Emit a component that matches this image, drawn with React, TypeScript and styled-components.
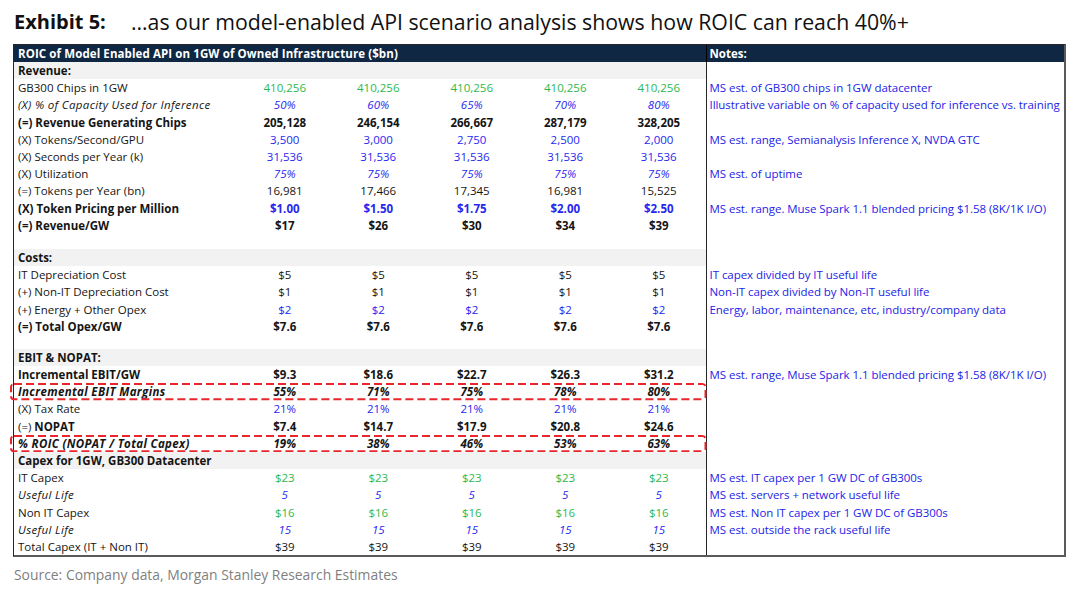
import React from 'react';
import styled, { createGlobalStyle } from 'styled-components';

type Tone = 'black' | 'green' | 'blue';

interface RowData {
  label?: React.ReactNode;
  values?: string[];
  tone?: Tone;
  labelBold?: boolean;
  labelItalic?: boolean;
  valueBold?: boolean;
  valueItalic?: boolean;
  note?: string;
  band?: boolean;
  highlight?: boolean;
  spacer?: number;
}

const ROW_H = 17.2;

const toneColor: Record<Tone, string> = {
  black: '#151515',
  green: '#2db84d',
  blue: '#2727f0',
};

const GlobalStyle = createGlobalStyle`
  html, body {
    margin: 0;
    padding: 0;
    background: #ffffff;
  }
  body {
    font-family: "Open Sans", "Noto Sans", sans-serif;
    color: #151515;
  }
`;

const Page = styled.div`
  width: 1080px;
  height: 593px;
  padding-left: 13px;
  box-sizing: border-box;
  overflow: hidden;
`;

const Title = styled.h1`
  margin: 0;
  height: 44px;
  display: flex;
  align-items: center;
  padding: 0 0 2px 1px;
  box-sizing: border-box;
  font-size: 21.3px;
  font-weight: 400;
  color: #111;
  white-space: nowrap;
`;

const ExhibitNo = styled.span`
  width: 117px;
  font-size: 20px;
  font-weight: 700;
`;

const Table = styled.div`
  width: 1053px;
  box-sizing: border-box;
  border: 1px solid #262626;
  border-right: 2px solid #5a5a5a;
  border-bottom: 2px solid #5a5a5a;
  font-size: 11.5px;
`;

const HeaderRow = styled.div`
  display: flex;
  height: 17px;
  background: #0f2742;
  color: #ffffff;
  font-weight: 700;
`;

const HeaderMain = styled.div`
  width: 691.5px;
  padding-left: 4px;
  box-sizing: border-box;
  display: flex;
  align-items: center;
  white-space: nowrap;
  letter-spacing: 0.1px;
`;

const HeaderNotes = styled.div`
  flex: 1;
  border-left: 1px solid #000;
  padding-left: 3px;
  display: flex;
  align-items: center;
`;

const Row = styled.div<{ $h: number }>`
  display: flex;
  height: ${(p) => p.$h}px;
`;

const Main = styled.div<{ $band?: boolean }>`
  position: relative;
  width: 691.5px;
  display: grid;
  grid-template-columns: 224px repeat(5, 93.5px);
  align-items: center;
  background: ${(p) => (p.$band ? '#f2f2f2' : 'transparent')};
`;

/* red dashed call-out drawn over a row */
const CallOut = styled.svg`
  position: absolute;
  left: -4px;
  top: 0;
  width: calc(100% + 5px);
  height: 100%;
  overflow: visible;
  pointer-events: none;

  rect {
    x: 1px;
    y: 1px;
    width: calc(100% - 2px);
    height: calc(100% - 2px);
    fill: none;
    stroke: #e8262b;
    stroke-width: 2px;
    stroke-dasharray: 8 4;
  }
`;

const Label = styled.div<{ $bold?: boolean; $italic?: boolean }>`
  padding-left: 4px;
  white-space: nowrap;
  font-weight: ${(p) => (p.$bold ? 700 : 400)};
  font-style: ${(p) => (p.$italic ? 'italic' : 'normal')};
  letter-spacing: ${(p) => (p.$italic ? '0.35px' : '0')};
`;

const Value = styled.div<{ $tone: Tone; $bold?: boolean; $italic?: boolean }>`
  text-align: center;
  white-space: nowrap;
  color: ${(p) => toneColor[p.$tone]};
  font-weight: ${(p) => (p.$bold ? 700 : 400)};
  font-style: ${(p) => (p.$italic ? 'italic' : 'normal')};
`;

const Note = styled.div`
  flex: 1;
  border-left: 1px solid #262626;
  padding-left: 3px;
  display: flex;
  align-items: center;
  white-space: nowrap;
  color: #2323e6;
  letter-spacing: -0.05px;
`;

const Strong = styled.b`
  font-weight: 700;
`;

const Source = styled.p`
  margin: 9px 0 0 1px;
  font-size: 13.9px;
  line-height: 18px;
  color: #7f7f7f;
`;

const five = (v: string) => [v, v, v, v, v];

const rows: RowData[] = [
  { label: 'Revenue:', labelBold: true, band: true },
  { label: 'GB300 Chips in 1GW', values: five('410,256'), tone: 'green', note: 'MS est. of GB300 chips in 1GW datacenter' },
  {
    label: '(X) % of Capacity Used for Inference',
    labelItalic: true,
    values: ['50%', '60%', '65%', '70%', '80%'],
    tone: 'blue',
    valueItalic: true,
    note: 'Illustrative variable on % of capacity used for inference vs. training',
  },
  {
    label: '(=) Revenue Generating Chips',
    labelBold: true,
    values: ['205,128', '246,154', '266,667', '287,179', '328,205'],
    valueBold: true,
  },
  {
    label: '(X) Tokens/Second/GPU',
    values: ['3,500', '3,000', '2,750', '2,500', '2,000'],
    tone: 'blue',
    note: 'MS est. range, Semianalysis Inference X, NVDA GTC',
  },
  { label: '(X) Seconds per Year (k)', values: five('31,536'), tone: 'blue' },
  { label: '(X) Utilization', values: five('75%'), tone: 'blue', valueItalic: true, note: 'MS est. of uptime' },
  { label: '(=) Tokens per Year (bn)', values: ['16,981', '17,466', '17,345', '16,981', '15,525'] },
  {
    label: '(X) Token Pricing per Million',
    labelBold: true,
    values: ['$1.00', '$1.50', '$1.75', '$2.00', '$2.50'],
    tone: 'blue',
    valueBold: true,
    note: 'MS est. range. Muse Spark 1.1 blended pricing $1.58 (8K/1K I/O)',
  },
  { label: '(=) Revenue/GW', labelBold: true, values: ['$17', '$26', '$30', '$34', '$39'], valueBold: true },
  { spacer: 15 },
  { label: 'Costs:', labelBold: true, band: true },
  { label: 'IT Depreciation Cost', values: five('$5'), note: 'IT capex divided by IT useful life' },
  { label: '(+) Non-IT Depreciation Cost', values: five('$1'), note: 'Non-IT capex divided by Non-IT useful life' },
  {
    label: '(+) Energy + Other Opex',
    values: five('$2'),
    tone: 'blue',
    note: 'Energy, labor, maintenance, etc, industry/company data',
  },
  { label: '(=) Total Opex/GW', labelBold: true, values: five('$7.6'), valueBold: true },
  { spacer: 14 },
  { label: 'EBIT & NOPAT:', labelBold: true, band: true },
  {
    label: 'Incremental EBIT/GW',
    labelBold: true,
    values: ['$9.3', '$18.6', '$22.7', '$26.3', '$31.2'],
    valueBold: true,
    note: 'MS est. range, Muse Spark 1.1 blended pricing $1.58 (8K/1K I/O)',
  },
  {
    label: 'Incremental EBIT Margins',
    labelBold: true,
    labelItalic: true,
    values: ['55%', '71%', '75%', '78%', '80%'],
    valueBold: true,
    valueItalic: true,
    highlight: true,
  },
  { label: '(X) Tax Rate', values: five('21%'), tone: 'blue' },
  {
    label: (
      <>
        (=) <Strong>NOPAT</Strong>
      </>
    ),
    values: ['$7.4', '$14.7', '$17.9', '$20.8', '$24.6'],
    valueBold: true,
  },
  {
    label: '% ROIC (NOPAT / Total Capex)',
    labelBold: true,
    labelItalic: true,
    values: ['19%', '38%', '46%', '53%', '63%'],
    valueBold: true,
    valueItalic: true,
    highlight: true,
  },
  { label: 'Capex for 1GW, GB300 Datacenter', labelBold: true, band: true },
  { label: 'IT Capex', values: five('$23'), tone: 'green', note: 'MS est. IT capex per 1 GW DC of GB300s' },
  {
    label: 'Useful Life',
    labelItalic: true,
    values: five('5'),
    tone: 'blue',
    valueItalic: true,
    note: 'MS est. servers + network useful life',
  },
  { label: 'Non IT Capex', values: five('$16'), tone: 'green', note: 'MS est. Non IT capex per 1 GW DC of GB300s' },
  {
    label: 'Useful Life',
    labelItalic: true,
    values: five('15'),
    tone: 'blue',
    valueItalic: true,
    note: 'MS est. outside the rack useful life',
  },
  { label: 'Total Capex (IT + Non IT)', values: five('$39') },
];

const TableRow = ({ row }: { row: RowData }) => {
  if (row.spacer) {
    return (
      <Row $h={row.spacer}>
        <Main />
        <Note />
      </Row>
    );
  }
  return (
    <Row $h={ROW_H}>
      <Main $band={row.band}>
        <Label $bold={row.labelBold} $italic={row.labelItalic}>
          {row.label}
        </Label>
        {row.values?.map((v, i) => (
          <Value key={i} $tone={row.tone ?? 'black'} $bold={row.valueBold} $italic={row.valueItalic}>
            {v}
          </Value>
        ))}
        {row.highlight && (
          <CallOut aria-hidden="true">
            <rect rx="3" ry="3" />
          </CallOut>
        )}
      </Main>
      <Note>{row.note}</Note>
    </Row>
  );
};

const App = () => {
  return (
    <Page>
      <GlobalStyle />
      <Title>
        <ExhibitNo>Exhibit 5:</ExhibitNo>
        …as our model-enabled API scenario analysis shows how ROIC can reach 40%+
      </Title>
      <Table>
        <HeaderRow>
          <HeaderMain>ROIC of Model Enabled API on 1GW of Owned Infrastructure ($bn)</HeaderMain>
          <HeaderNotes>Notes:</HeaderNotes>
        </HeaderRow>
        {rows.map((row, i) => (
          <TableRow key={i} row={row} />
        ))}
      </Table>
      <Source>Source: Company data, Morgan Stanley Research Estimates</Source>
    </Page>
  );
};

export default App;
